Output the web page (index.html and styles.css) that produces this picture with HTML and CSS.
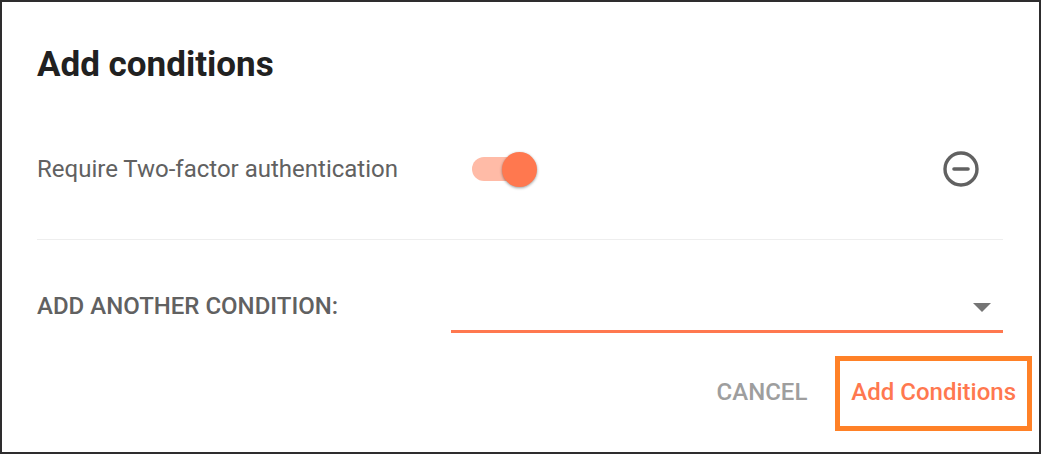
FILE: index.html
```html
<!DOCTYPE html>
<html lang="en">
<head>
<meta charset="utf-8">
<meta name="viewport" content="width=device-width, initial-scale=1">
<title>Add conditions</title>
<link rel="stylesheet" href="styles.css">
</head>
<body>
<form class="dialog">
  <h1 class="title">Add conditions</h1>
  <div class="content">
    <div class="row condition">
      <label for="two-factor">Require Two-factor authentication</label>
      <div class="condition-controls">
        <input class="switch" type="checkbox" role="switch" id="two-factor" checked>
        <button class="remove" type="button" aria-label="Remove condition">
          <svg viewBox="0 0 36 36" width="36" height="36" fill="none" stroke="currentColor" aria-hidden="true">
            <circle cx="18" cy="18" r="16" stroke-width="3.4"/>
            <path d="M11 18h14" stroke-width="3.6" stroke-linecap="round"/>
          </svg>
        </button>
      </div>
    </div>
    <div class="row another">
      <label class="another-label" for="condition">ADD ANOTHER CONDITION:</label>
      <div class="select-field">
        <select class="select" id="condition"><option value=""></option></select>
        <svg class="arrow" viewBox="0 0 18 9" width="18" height="9" aria-hidden="true"><path d="M0 0h18l-9 9z" fill="currentColor"/></svg>
      </div>
    </div>
  </div>
  <div class="actions">
    <button class="button cancel" type="button">CANCEL</button>
    <button class="button submit" type="button">Add Conditions</button>
  </div>
</form>
</body>
</html>
```
FILE: styles.css
```css
* {
  box-sizing: border-box;
}

body {
  margin: 0;
  background: #fff;
  color: #616161;
  font-family: Roboto, "Liberation Sans", sans-serif;
  font-size: 24px;
  line-height: 33px;
}

.dialog {
  min-height: 100vh;
  border: 2px solid #2e2d2e;
  padding: 41px 0 20px;
}

.title {
  margin: 0 35px 12px;
  color: #212121;
  font-size: 35px;
  font-weight: 700;
  line-height: 44px;
}

.content {
  margin: 0 36px 0 35px;
}

.row {
  display: grid;
  grid-template-columns: 3fr 4fr;
  align-items: center;
}

.condition {
  min-height: 141px;
  border-bottom: 1px solid #eee;
}

.condition-controls {
  display: flex;
  align-items: center;
  justify-content: space-between;
  padding: 0 24px 0 21px;
}

.switch {
  appearance: none;
  display: grid;
  align-items: center;
  width: 65px;
  height: 35px;
  margin: 0;
  cursor: pointer;
}

.switch::before,
.switch::after {
  content: "";
  grid-area: 1 / 1;
}

.switch::before {
  width: 60px;
  height: 24px;
  border-radius: 12px;
  background: #ffbba7;
}

.switch::after {
  width: 35px;
  height: 35px;
  border-radius: 50%;
  background: #bdbdbd;
  box-shadow: 0 1px 3px rgba(0, 0, 0, 0.4);
}

.switch:checked::after {
  justify-self: end;
  background: #ff784f;
}

.remove {
  display: flex;
  padding: 0;
  border: 0;
  background: none;
  color: #616161;
  cursor: pointer;
}

.another {
  padding-top: 40px;
}

.another-label {
  font-weight: 500;
}

.select-field {
  display: grid;
  align-items: center;
  border-bottom: 3px solid #ff784f;
}

.select {
  grid-area: 1 / 1;
  appearance: none;
  width: 100%;
  height: 50px;
  padding: 0 40px 0 0;
  border: 0;
  background: none;
  color: inherit;
  font: inherit;
  outline: none;
}

.arrow {
  grid-area: 1 / 1;
  justify-self: end;
  margin: 4px 12px 0 0;
  color: #757575;
  pointer-events: none;
}

.actions {
  display: flex;
  justify-content: flex-end;
  gap: 12px;
  margin: 23px 7px 0 35px;
}

.button {
  padding: 15px 11px 17px;
  border: 5px solid transparent;
  background: none;
  font: inherit;
  font-weight: 500;
  cursor: pointer;
}

.cancel {
  color: #9e9e9e;
}

.submit {
  border-color: #ff8127;
  color: #ff784f;
}
```
